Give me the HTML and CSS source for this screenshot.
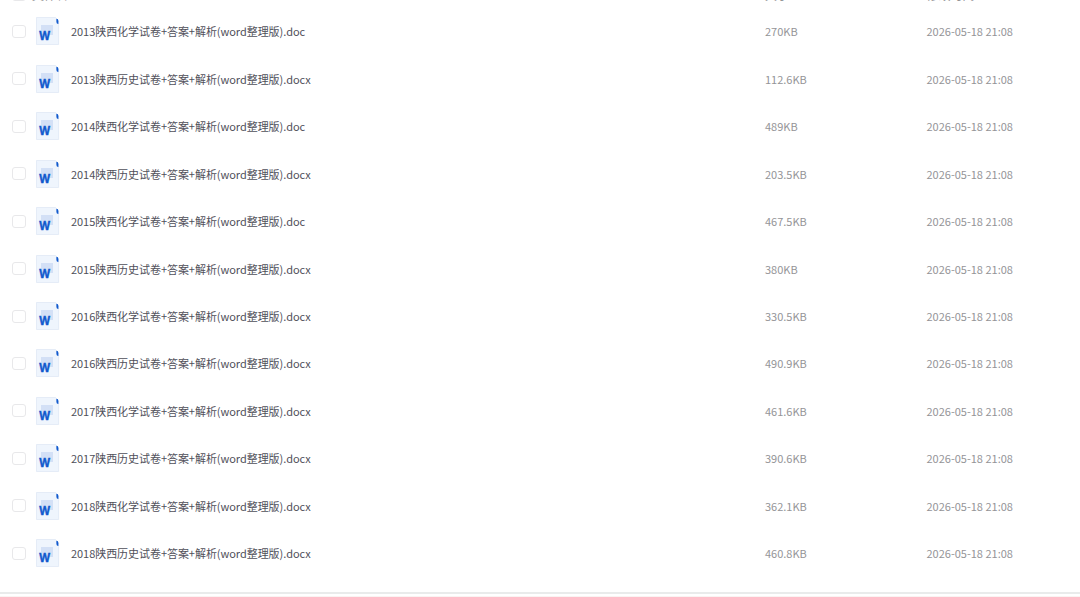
FILE: index.html
```
<!DOCTYPE html>
<html lang="zh-CN"><head><meta charset="utf-8"><title>文件列表</title><link rel="stylesheet" href="styles.css"></head>
<body>
<svg width="0" height="0" class="defs"><defs>
<symbol id="word" viewBox="0 0 24 28"><path d="M.5 .5H19.5L22.6 4V27.5H.5Z" fill="#eff5fd" stroke="#dce5f3" stroke-width=".7"/><path d="M5 8H17V18H5Z" fill="#d3e0f6"/><path d="M20.4 1.7Q22.4 1.8 22.4 4V7Q20.4 6.9 20.4 5Z" fill="#1059cd"/><text class="letter" x="3.2" y="23" textLength="10.8" lengthAdjust="spacingAndGlyphs">W</text></symbol></defs></svg>
<main class="list">
<header class="row head"><span class="box"></span><span class="title">文件名</span><span class="size">大小</span><span class="date">修改时间</span></header>
<div id="rows"></div>
</main>
<footer class="bottom"></footer>
<script src="rows.js"></script>
</body></html>
```

FILE: styles.css
```
body{margin:0;width:1080px;height:597px;overflow:hidden;background:#fff;font:11px/16px "Noto Sans CJK SC",sans-serif;color:#50505a;display:flex;flex-direction:column}
.defs{position:absolute}
.list{height:592px;overflow:hidden;flex:none}
.row{height:47.45px;display:grid;grid-template-columns:36px 35px 694px 161.5px 1fr;align-items:center}
.head{height:24px;margin-top:-16.3px;font-size:12px;line-height:14px;padding-bottom:2px;box-sizing:border-box;color:#999}
.title{grid-column:2 / 4;margin-left:-4px}
.name{letter-spacing:-.05px}
.box{box-sizing:border-box;width:14px;height:13px;margin-left:12px;border:1px solid #e8e8ea;border-radius:3px}
.icon{width:24px;height:28px;display:block}
.letter{font:bold 12.5px "Noto Sans",sans-serif;fill:#1059cd;stroke:#1059cd;stroke-width:.45px}
.size,.date{color:#949497}
.bottom{height:2px;background:#e9ebeb;border-bottom:2px solid #fff;box-shadow:0 1px #faf3f2}
```

FILE: rows.js
```
const rows = [
  ["2013陕西化学试卷+答案+解析(word整理版).doc", "270KB"],
  ["2013陕西历史试卷+答案+解析(word整理版).docx", "112.6KB"],
  ["2014陕西化学试卷+答案+解析(word整理版).doc", "489KB"],
  ["2014陕西历史试卷+答案+解析(word整理版).docx", "203.5KB"],
  ["2015陕西化学试卷+答案+解析(word整理版).doc", "467.5KB"],
  ["2015陕西历史试卷+答案+解析(word整理版).docx", "380KB"],
  ["2016陕西化学试卷+答案+解析(word整理版).docx", "330.5KB"],
  ["2016陕西历史试卷+答案+解析(word整理版).docx", "490.9KB"],
  ["2017陕西化学试卷+答案+解析(word整理版).docx", "461.6KB"],
  ["2017陕西历史试卷+答案+解析(word整理版).docx", "390.6KB"],
  ["2018陕西化学试卷+答案+解析(word整理版).docx", "362.1KB"],
  ["2018陕西历史试卷+答案+解析(word整理版).docx", "460.8KB"]
];
document.getElementById('rows').innerHTML = rows.map(r => `<div class="row"><span class="box"></span><svg class="icon"><use href="#word"/></svg><span class="name">${r[0]}</span><span class="size">${r[1]}</span><span class="date">2026-05-18 21:08</span></div>`).join('');
```
